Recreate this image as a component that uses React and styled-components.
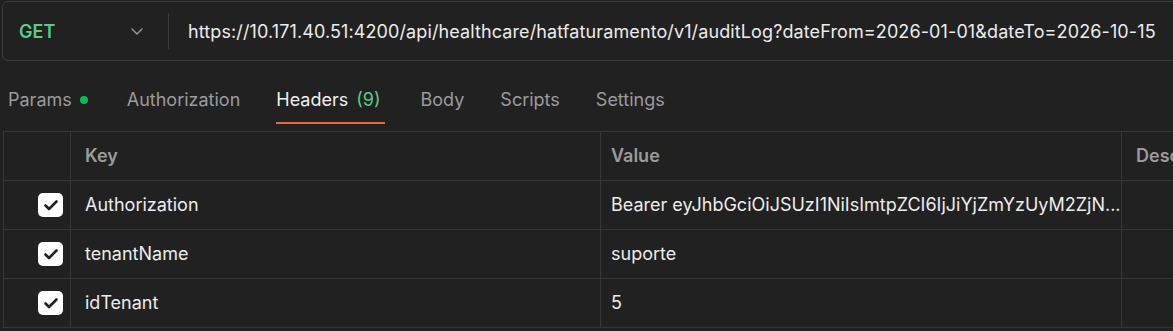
import React from "react";
import styled, { createGlobalStyle } from "styled-components";

const Global = createGlobalStyle`
  html, body {
    margin: 0;
    padding: 0;
    background: #212121;
    overflow: hidden;
  }
  body {
    font-family: Inter, "Noto Sans", sans-serif;
    color: #e6e6e6;
  }
`;

const Page = styled.div`
  width: 1173px;
  height: 331px;
  background: #212121;
  padding: 1px 0 0 2px;
  box-sizing: border-box;
`;

const UrlBar = styled.div`
  display: flex;
  align-items: center;
  height: 60px;
  width: 1190px;
  border: 1px solid #3c3c3c;
  border-radius: 6px;
  box-sizing: border-box;
`;

const Method = styled.div`
  display: flex;
  align-items: center;
  justify-content: space-between;
  width: 165px;
  padding: 0 24px 0 16px;
  box-sizing: border-box;
  font-size: 18px;
  font-weight: 600;
  color: #5ccb87;
`;

const Divider = styled.div`
  width: 1px;
  height: 36px;
  background: #3a3a3a;
`;

const Url = styled.div`
  padding-left: 19px;
  font-size: 18px;
  letter-spacing: 0.11px;
  color: #ececec;
  white-space: nowrap;
`;

const Tabs = styled.div`
  display: flex;
  align-items: flex-end;
  height: 63px;
  padding-left: 6px;
`;

const Tab = styled.div`
  display: flex;
  align-items: center;
  height: 38px;
  margin-right: ${(p) => p.$gap || 36}px;
  padding-right: ${(p) => (p.$active ? 4 : 0)}px;
  font-size: 18px;
  color: ${(p) => (p.$active ? "#f0f0f0" : "#9b9b9b")};
  border-bottom: 2px solid ${(p) => (p.$active ? "#e8683b" : "transparent")};
  box-sizing: border-box;
  padding-bottom: 9px;
`;

const Count = styled.span`
  color: #5ccb87;
  margin-left: 8px;
`;

const Dot = styled.span`
  width: 8px;
  height: 8px;
  border-radius: 50%;
  background: #0cbb52;
  margin-left: 8px;
`;

const Table = styled.div`
  margin-top: 7px;
  margin-left: 1px;
  border-top: 1px solid #353535;
  border-left: 1px solid #353535;
`;

const Row = styled.div`
  display: grid;
  grid-template-columns: 67px 530px 521px 60px;
  height: 49px;
  border-bottom: 1px solid #353535;
  box-sizing: border-box;
`;

const Cell = styled.div`
  display: flex;
  align-items: center;
  padding-left: ${(p) => p.$pad || 0}px;
  padding-bottom: ${(p) => (p.$check ? 0 : 2)}px;
  justify-content: ${(p) => (p.$check ? "flex-end" : "flex-start")};
  padding-right: ${(p) => (p.$check ? "7px" : "0")};
  border-right: 1px solid #353535;
  font-size: 18px;
  font-weight: ${(p) => (p.$head ? 600 : 400)};
  color: ${(p) => (p.$head ? "#9b9b9b" : "#ececec")};
  white-space: nowrap;
  overflow: hidden;
  &:last-child {
    border-right: none;
  }
`;

const Check = styled.div`
  width: 25px;
  height: 24px;
  border-radius: 5px;
  background: #ffffff;
  display: flex;
  align-items: center;
  justify-content: center;
`;

const Chevron = () => (
  <svg width="14" height="14" viewBox="0 0 14 14" fill="none">
    <path d="M2 5l5 5 5-5" stroke="#9b9b9b" strokeWidth="1.4" strokeLinecap="round" strokeLinejoin="round" />
  </svg>
);

const Tick = () => (
  <svg width="16" height="16" viewBox="0 0 16 16" fill="none">
    <path d="M2.5 8.5l3.5 3.5 7.5-7.5" stroke="#212121" strokeWidth="2.6" strokeLinecap="round" strokeLinejoin="round" />
  </svg>
);

const rows = [
  ["Authorization", "Bearer eyJhbGciOiJSUzI1NiIsImtpZCI6IjJiYjZmYzUyM2ZjN..."],
  ["tenantName", "suporte"],
  ["idTenant", "5"],
];

export default function App() {
  return (
    <Page>
      <Global />
      <UrlBar>
        <Method>
          GET
          <Chevron />
        </Method>
        <Divider />
        <Url>
          https://10.171.40.51:4200/api/healthcare/hatfaturamento/v1/auditLog?dateFrom=2026-01-01&dateTo=2026-10-15
        </Url>
      </UrlBar>
      <Tabs>
        <Tab $gap={39}>
          Params
          <Dot />
        </Tab>
        <Tab>Authorization</Tab>
        <Tab $active>
          Headers<Count>(9)</Count>
        </Tab>
        <Tab>Body</Tab>
        <Tab>Scripts</Tab>
        <Tab>Settings</Tab>
      </Tabs>
      <Table>
        <Row>
          <Cell />
          <Cell $pad={14} $head>Key</Cell>
          <Cell $pad={10} $head>Value</Cell>
          <Cell $pad={14} $head>Description</Cell>
        </Row>
        {rows.map(([k, v]) => (
          <Row key={k}>
            <Cell $check>
              <Check>
                <Tick />
              </Check>
            </Cell>
            <Cell $pad={14}>{k}</Cell>
            <Cell $pad={10}>{v}</Cell>
            <Cell />
          </Row>
        ))}
      </Table>
    </Page>
  );
}
